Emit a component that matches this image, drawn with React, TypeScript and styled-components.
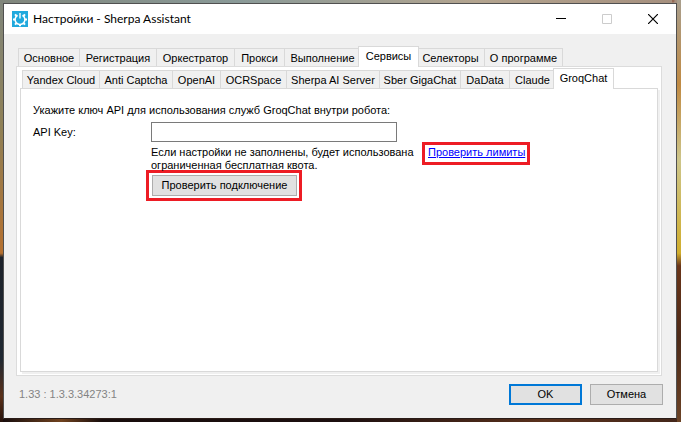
import React, { useState } from "react";
import styled, { createGlobalStyle } from "styled-components";

const GlobalStyle = createGlobalStyle`
  * { box-sizing: border-box; }
  body { margin: 0; }
  button, input { font: inherit; color: inherit; }
`;

const Desktop = styled.div`
  display: flex;
  min-height: 100vh;
  padding: 3px 4px 3px 3px;
  font: 11px/13px "Liberation Sans", Arial, sans-serif;
  color: #000;
  background:
    radial-gradient(circle at 1px 1px, #7a2f1566 1px, transparent 2px) 100% 0 / 9px 17px repeat-y,
    linear-gradient(#a99f8e, #c08a43 20%, #cdc58a 38%, #d0ad2c 60%, #6a3519 63%, #4d2a18 80%, #6b4326) 100% 0 / 4px 100% no-repeat,
    linear-gradient(#80867c, #8f8056 30%, #b5702f 60%, #1d222a 61%, #1f2832 85%, #5a3019 94%, #25120c) 0 0 / 3px 100% no-repeat,
    linear-gradient(90deg, #80867c, #8a9a98 35%, #b3a48f 70%, #a58f7e) 0 0 / 100% 3px no-repeat,
    linear-gradient(90deg, #140b0c, #70421f 9%, #180d0c 15%, #1c0f0f 50%, #5a311c 80%, #43261a);
`;

const Window = styled.main`
  flex: 1;
  min-width: 0;
  display: flex;
  flex-direction: column;
  border: 1px solid #505050;
  border-bottom-color: #2a1c18;
  background: #f0f0f0;
`;

const TitleBar = styled.header`
  display: flex;
  align-items: center;
  height: 30px;
  padding-left: 8px;
  background: #fff;
`;

const Title = styled.h1`
  flex: 1;
  margin: 0 0 0 5px;
  font: 12px/16px Lato, sans-serif;
`;

const CaptionButton = styled.button`
  display: grid;
  place-items: center;
  width: 46px;
  height: 30px;
  padding: 0;
  border: 0;
  background: none;
`;

const Body = styled.div`
  flex: 1;
  display: flex;
  flex-direction: column;
  padding: 12px 14px 8px 12px;
`;

const TabList = styled.div`
  display: flex;
  align-items: flex-end;
  height: 20px;
  padding-left: 2px;
`;

const Tab = styled.button<{ $active: boolean; $width: number }>`
  flex: none;
  position: relative;
  width: ${(p) => p.$width + (p.$active ? 5 : 1)}px;
  height: ${(p) => (p.$active ? 21 : 18)}px;
  margin: ${(p) => (p.$active ? "0 -3px -1px -2px" : "0 -1px 0 0")};
  padding: ${(p) => (p.$active ? "0 0 2px" : "2px 0 0")};
  border: 1px solid #d9d9d9;
  border-bottom: 0;
  background: ${(p) => (p.$active ? "#fff" : "#f0f0f0")};
  z-index: ${(p) => (p.$active ? 1 : 0)};
  white-space: nowrap;
  line-height: 13px;
`;

const OuterPanel = styled.section`
  flex: 1;
  display: flex;
  flex-direction: column;
  padding: 1px 3px 3px;
  border: 1px solid #dcdcdc;
  background: #fff;
`;

const InnerPanel = styled.section`
  flex: 1;
  padding: 15px 12px;
  border: 1px solid #d9d9d9;
  background: #fff;
  box-shadow: 2px 2px 0 #f0f0f0;
`;

const Form = styled.form`
  display: grid;
  grid-template-columns: 118px 1fr;
`;

const Intro = styled.p`
  grid-column: 1 / -1;
  margin: 0 0 5px;
`;

const FieldLabel = styled.label`
  align-self: center;
`;

const KeyInput = styled.input`
  width: 246px;
  height: 20px;
  padding: 1px 3px;
  border: 1px solid #7a7a7a;
  background: #fff;
`;

const Details = styled.div`
  grid-column: 2;
`;

const HintRow = styled.div`
  display: flex;
  align-items: flex-start;
  gap: 5px;
`;

const Hint = styled.p`
  width: 266px;
  margin: 0;
  padding-top: 4px;
`;

const LinkFrame = styled.div`
  padding: 1px 2px 3px 3px;
  border: 3px solid #ed1c24;
  white-space: nowrap;
`;

const LimitsLink = styled.a`
  color: #00f;
  text-decoration: underline;
  &:visited { color: #00f; }
`;

const ButtonFrame = styled.div`
  width: fit-content;
  margin: -2px 0 0 -5px;
  padding: 2px 2px 2px 3px;
  border: 3px solid #ed1c24;
`;

const PushButton = styled.button<{ $primary?: boolean; $wide?: boolean }>`
  display: block;
  width: ${(p) => (p.$wide ? 145 : 73)}px;
  height: 21px;
  padding: 0;
  border: ${(p) => (p.$primary ? "2px solid #0078d7" : "1px solid #adadad")};
  background: #e1e1e1;
`;

const Footer = styled.footer`
  display: flex;
  align-items: center;
  gap: 8px;
  padding: 0 13px 13px 15px;
`;

const Version = styled.span`
  flex: 1;
  color: #838383;
`;

function AppIcon() {
  return (
    <svg width="16" height="16" viewBox="0 0 16 16" aria-hidden="true">
      <rect width="16" height="16" fill="#20a9dd" />
      <g fill="none" stroke="#fff">
        <path d="M5.6 4.3A4.9 4.9 0 1 0 10.4 4.3" strokeWidth="1.5" />
        <path d="M8 2v5.5" strokeWidth="1.4" />
        <path
          d="M4.6 5 3 3.4M11.4 5 13 3.4M3.2 8.6H1M12.8 8.6H15M4.6 12 3 13.6M11.4 12 13 13.6M8 13.2v2.1"
          strokeWidth="2"
        />
      </g>
    </svg>
  );
}

interface TabItem {
  name: string;
  width: number;
}

const SECTIONS: TabItem[] = [
  { name: "Основное", width: 61 },
  { name: "Регистрация", width: 77 },
  { name: "Оркестратор", width: 78 },
  { name: "Прокси", width: 50 },
  { name: "Выполнение", width: 76 },
  { name: "Сервисы", width: 56 },
  { name: "Селекторы", width: 68 },
  { name: "О программе", width: 78 },
];

const SERVICES: TabItem[] = [
  { name: "Yandex Cloud", width: 77 },
  { name: "Anti Captcha", width: 73 },
  { name: "OpenAI", width: 48 },
  { name: "OCRSpace", width: 66 },
  { name: "Sherpa AI Server", width: 93 },
  { name: "Sber GigaChat", width: 81 },
  { name: "DaData", width: 49 },
  { name: "Claude", width: 46 },
  { name: "GroqChat", width: 56 },
];

function Tabs({ items, initial, label }: { items: TabItem[]; initial: string; label: string }) {
  const [active, setActive] = useState(initial);
  return (
    <TabList role="tablist" aria-label={label}>
      {items.map(({ name, width }) => (
        <Tab
          key={name}
          type="button"
          role="tab"
          aria-selected={name === active}
          $active={name === active}
          $width={width}
          onClick={() => setActive(name)}
        >
          {name}
        </Tab>
      ))}
    </TabList>
  );
}

export default function App() {
  return (
    <Desktop>
      <GlobalStyle />
      <Window>
        <TitleBar>
          <AppIcon />
          <Title>Настройки - Sherpa Assistant</Title>
          <CaptionButton type="button" aria-label="Свернуть">
            <svg width="10" height="10"><path d="M0 4.5h10" stroke="#000" /></svg>
          </CaptionButton>
          <CaptionButton type="button" aria-label="Развернуть" disabled>
            <svg width="10" height="10"><path d="M.5.5h9v9h-9z" fill="none" stroke="#ccc" /></svg>
          </CaptionButton>
          <CaptionButton type="button" aria-label="Закрыть">
            <svg width="10" height="10"><path d="M0 0l10 10M10 0L0 10" stroke="#000" strokeWidth="1.2" /></svg>
          </CaptionButton>
        </TitleBar>
        <Body>
          <Tabs items={SECTIONS} initial="Сервисы" label="Разделы" />
          <OuterPanel>
            <Tabs items={SERVICES} initial="GroqChat" label="Службы" />
            <InnerPanel>
              <Form onSubmit={(e) => e.preventDefault()}>
                <Intro>Укажите ключ API для использования служб GroqChat внутри робота:</Intro>
                <FieldLabel htmlFor="api-key">API Key:</FieldLabel>
                <KeyInput id="api-key" type="text" />
                <Details>
                  <HintRow>
                    <Hint>Если настройки не заполнены, будет использована ограниченная бесплатная квота.</Hint>
                    <LinkFrame>
                      <LimitsLink href="#limits">Проверить лимиты</LimitsLink>
                    </LinkFrame>
                  </HintRow>
                  <ButtonFrame>
                    <PushButton type="button" $wide>Проверить подключение</PushButton>
                  </ButtonFrame>
                </Details>
              </Form>
            </InnerPanel>
          </OuterPanel>
        </Body>
        <Footer>
          <Version>1.33 : 1.3.3.34273:1</Version>
          <PushButton type="button" $primary>OK</PushButton>
          <PushButton type="button">Отмена</PushButton>
        </Footer>
      </Window>
    </Desktop>
  );
}
